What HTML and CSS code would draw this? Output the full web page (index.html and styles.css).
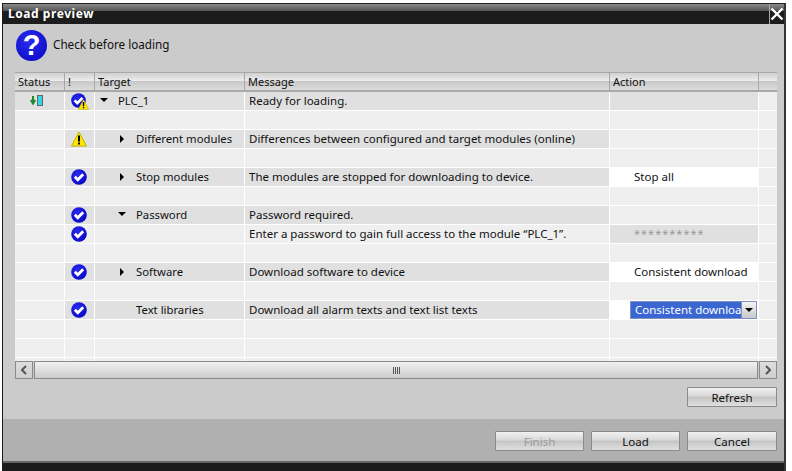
FILE: index.html
```html
<!DOCTYPE html>
<html lang="en">
<head>
<meta charset="utf-8">
<title>Load preview</title>
<link rel="stylesheet" href="styles.css">
</head>
<body>
<svg class="defs" width="0" height="0" aria-hidden="true">
  <defs>
    <radialGradient id="blue" cx="0.4" cy="0.35" r="0.7">
      <stop offset="0" stop-color="#2a2af0"/>
      <stop offset="1" stop-color="#0606c4"/>
    </radialGradient>
    <symbol id="ok" viewBox="0 0 16 16">
      <circle cx="8" cy="8" r="7.800" fill="url(#blue)"/>
      <path d="M3.800 7.800l3 3 5.400-5.600" fill="none" stroke="#fff" stroke-width="2.800"/>
    </symbol>
    <symbol id="warn" viewBox="0 0 16 16">
      <path d="M8 1L15.500 15H.5z" fill="#ffe600" stroke="#c8b400" stroke-width="1"/>
      <path d="M7 4.500h2v6H7zM7 11.500h2v2H7z" fill="#000"/>
    </symbol>
  </defs>
</svg>
<main class="window">
  <header class="titlebar">
    <span class="title">Load preview</span>
    <button class="close" aria-label="Close">
      <svg width="14" height="14" viewBox="0 0 14 14"><path d="M1.500 1.500l11 11M12.500 1.500l-11 11" stroke="#fff" stroke-width="2.400" fill="none"/></svg>
    </button>
  </header>
  <section class="content">
    <div class="prompt">
      <span class="qmark">?</span>
      <span class="prompt-text">Check before loading</span>
    </div>
    <div class="table">
      <div class="row head">
        <div class="cell">Status</div><div class="cell">!</div><div class="cell">Target</div><div class="cell">Message</div><div class="cell">Action</div><div class="cell"></div>
      </div>
      <div class="body">
        <div class="row">
          <div class="cell hl center"><svg class="status" width="14" height="14" viewBox="0 0 14 14"><path d="M3 2v6.500M.8 6L3 9.500 5.200 6" stroke="#1b8b2b" stroke-width="2" fill="none"/><rect x="7.500" y="1.500" width="5" height="10" fill="#35d5e0" stroke="#5a6a70"/></svg></div>
          <div class="cell hl center"><span class="overlay"><svg width="15" height="15"><use href="#ok"/></svg><svg class="mini" width="11" height="11"><use href="#warn"/></svg></span></div>
          <div class="cell hl tree"><i class="tri down"></i><span>PLC_1</span></div>
          <div class="cell hl msg">Ready for loading.</div>
          <div class="cell hl"></div>
          <div class="cell"></div>
        </div>
        <div class="row"><div class="cell"></div><div class="cell"></div><div class="cell"></div><div class="cell"></div><div class="cell"></div><div class="cell"></div></div>
        <div class="row">
          <div class="cell"></div>
          <div class="cell hl center"><svg class="ico" width="16" height="16"><use href="#warn"/></svg></div>
          <div class="cell hl tree l1"><i class="tri right"></i><span>Different modules</span></div>
          <div class="cell hl msg">Differences between configured and target modules (online)</div>
          <div class="cell"></div>
          <div class="cell"></div>
        </div>
        <div class="row"><div class="cell"></div><div class="cell"></div><div class="cell"></div><div class="cell"></div><div class="cell"></div><div class="cell"></div></div>
        <div class="row">
          <div class="cell"></div>
          <div class="cell hl center"><svg class="ico" width="16" height="16"><use href="#ok"/></svg></div>
          <div class="cell hl tree l1"><i class="tri right"></i><span>Stop modules</span></div>
          <div class="cell hl msg">The modules are stopped for downloading to device.</div>
          <div class="cell white action">Stop all</div>
          <div class="cell"></div>
        </div>
        <div class="row"><div class="cell"></div><div class="cell"></div><div class="cell"></div><div class="cell"></div><div class="cell"></div><div class="cell"></div></div>
        <div class="row">
          <div class="cell"></div>
          <div class="cell hl center"><svg class="ico" width="16" height="16"><use href="#ok"/></svg></div>
          <div class="cell hl tree l1"><i class="tri down"></i><span>Password</span></div>
          <div class="cell hl msg">Password required.</div>
          <div class="cell"></div>
          <div class="cell"></div>
        </div>
        <div class="row">
          <div class="cell"></div>
          <div class="cell center"><svg class="ico" width="16" height="16"><use href="#ok"/></svg></div>
          <div class="cell"></div>
          <div class="cell msg">Enter a password to gain full access to the module “PLC_1”.</div>
          <div class="cell hl action pass">**********</div>
          <div class="cell"></div>
        </div>
        <div class="row"><div class="cell"></div><div class="cell"></div><div class="cell"></div><div class="cell"></div><div class="cell"></div><div class="cell"></div></div>
        <div class="row">
          <div class="cell"></div>
          <div class="cell hl center"><svg class="ico" width="16" height="16"><use href="#ok"/></svg></div>
          <div class="cell hl tree l1"><i class="tri right"></i><span>Software</span></div>
          <div class="cell hl msg">Download software to device</div>
          <div class="cell white action">Consistent download</div>
          <div class="cell"></div>
        </div>
        <div class="row"><div class="cell"></div><div class="cell"></div><div class="cell"></div><div class="cell"></div><div class="cell"></div><div class="cell"></div></div>
        <div class="row">
          <div class="cell"></div>
          <div class="cell hl center"><svg class="ico" width="16" height="16"><use href="#ok"/></svg></div>
          <div class="cell hl tree l1"><i class="tri none"></i><span>Text libraries</span></div>
          <div class="cell hl msg">Download all alarm texts and text list texts</div>
          <div class="cell white combo-cell">
            <div class="combo"><span class="combo-text">Consistent download</span><span class="combo-btn"><i class="tri down small"></i></span></div>
          </div>
          <div class="cell"></div>
        </div>
        <div class="row"><div class="cell"></div><div class="cell"></div><div class="cell"></div><div class="cell"></div><div class="cell"></div><div class="cell"></div></div>
        <div class="row"><div class="cell"></div><div class="cell"></div><div class="cell"></div><div class="cell"></div><div class="cell"></div><div class="cell"></div></div>
        <div class="row"><div class="cell"></div><div class="cell"></div><div class="cell"></div><div class="cell"></div><div class="cell"></div><div class="cell"></div></div>
      </div>
      <div class="scrollbar">
        <button class="sb-btn" aria-label="Scroll left"><svg width="8" height="10" viewBox="0 0 8 10"><path d="M6 1L2 5l4 4" stroke="#555" stroke-width="2" fill="none"/></svg></button>
        <div class="sb-track"><span class="grip"></span></div>
        <button class="sb-btn" aria-label="Scroll right"><svg width="8" height="10" viewBox="0 0 8 10"><path d="M2 1l4 4-4 4" stroke="#555" stroke-width="2" fill="none"/></svg></button>
      </div>
    </div>
    <div class="refresh-row"><button class="btn">Refresh</button></div>
  </section>
  <footer class="footer">
    <button class="btn narrow disabled">Finish</button>
    <button class="btn narrow">Load</button>
    <button class="btn">Cancel</button>
  </footer>
</main>
</body>
</html>
```

FILE: styles.css
```css
* { box-sizing: border-box; }
html, body { margin: 0; height: 100%; }
body {
  background: #fff;
  font-family: "Noto Sans", "DejaVu Sans", sans-serif;
  font-size: 11.5px;
  color: #111;
  overflow: hidden;
  padding: 3px 0 0 2px;
}
.defs { position: absolute; }
.window {
  width: 784px;
  height: 468px;
  display: flex;
  flex-direction: column;
  border-left: 1px solid #1c1c1c;
  border-right: 2px solid #333;
  border-top: 1px solid #222;
  background: #cbcbcb;
}
.titlebar {
  height: 20px;
  flex: none;
  display: flex;
  justify-content: space-between;
  background: linear-gradient(#8a8a8a 0, #555 7px, #1c1c1c 7px, #1c1c1c 100%);
}
.title {
  color: #fff;
  font-weight: 700;
  font-size: 12px;
  padding: 1px 0 0 5px;
  letter-spacing: 0.55px;
}
.close {
  width: 15px;
  height: 20px;
  padding: 0;
  border: 0;
  border-left: 1px solid #aaa;
  background: transparent;
  display: flex;
  align-items: center;
  justify-content: center;
}
.content {
  flex: none;
  height: 395px;
  padding: 0 7px 0 12px;
}
.prompt {
  height: 48px;
  display: flex;
  align-items: center;
  gap: 6px;
  padding: 0 0 6px 1px;
  font-size: 11.7px;
}
.prompt-text { margin-top: -2px; }
.qmark {
  width: 31px;
  height: 31px;
  border-radius: 50%;
  background: radial-gradient(circle at 40% 35%, #2a2af0, #0606c0);
  color: #fff;
  font: 700 29px/31px "Liberation Sans", sans-serif;
  text-align: center;
}
.table { width: 762px; }
.row {
  display: grid;
  grid-template-columns: 50px 30px 150px 365px 149px 18px;
  height: 19px;
  border-bottom: 1px solid #fff;
}
.cell {
  border-right: 1px solid #fff;
  background: #efefef;
  padding-left: 3px;
  line-height: 18px;
  white-space: nowrap;
  overflow: hidden;
  display: flex;
  align-items: center;
}
.cell:last-child { border-right: 0; }
.row .hl { background: #e0e0e0; }
.row .white { background: #fff; }
.center { justify-content: center; padding-left: 0; }
.msg { padding-left: 4px; }
.ico { display: block; margin-right: 1px; }
.head {
  height: 20px;
  font-size: 11px;
  border-top: 1px solid #a8a8a8;
  border-bottom: 2px solid #a8a8a8;
}
.head .cell {
  background: linear-gradient(#d0d0d0, #ececec 45%, #c8c8c8 50%, #dcdcdc);
  border-right: 1px solid #a8a8a8;
}
.head .cell:last-child { border-right: 0; }
.body {
  height: 269px;
  overflow: hidden;
}
.tree { padding-left: 5px; font-size: 11.3px; }
.tree.l1 { padding-left: 23px; }
.tri {
  display: block;
  flex: none;
  width: 0;
  height: 0;
  margin-right: 10px;
  border-style: solid;
}
.tri.down {
  border-width: 4px 4px 0 4px;
  border-color: #000 transparent transparent;
  margin-top: -3px;
}
.tri.right {
  border-width: 4px 0 4px 4px;
  border-color: transparent transparent transparent #000;
  margin-left: 2px;
  margin-right: 12px;
}
.tri.none { border: 0; width: 18px; margin-right: 0; }
.combo-btn .tri.small { margin: 0; }
.overlay { position: relative; display: block; width: 17px; height: 17px; margin-right: 1px; }
.overlay svg { display: block; }
.overlay .mini { position: absolute; right: -1px; bottom: 0; }
.status { display: block; margin-right: 5px; }
.action { padding-left: 24px; }
.pass { color: #999; letter-spacing: 1px; font-size: 11px; }
.combo-cell { padding: 0 1px 0 20px; }
.combo {
  width: 127px;
  height: 18px;
  display: flex;
  background: #3a66d2;
  border: 1px solid #8090c0;
  color: #fff;
}
.combo-text {
  flex: 1;
  overflow: hidden;
  padding-left: 4px;
  line-height: 16px;
}
.combo-btn {
  flex: none;
  width: 15px;
  background: linear-gradient(#f4f4f4, #c8c8c8);
  border-left: 1px solid #8090c0;
  display: flex;
  align-items: center;
  justify-content: center;
}
.scrollbar {
  height: 18px;
  display: flex;
  gap: 1px;
}
.sb-btn {
  flex: none;
  width: 18px;
  padding: 0;
  border: 1px solid #8a8a8a;
  background: linear-gradient(#dedede, #cfcfcf);
  display: flex;
  align-items: center;
  justify-content: center;
}
.sb-track {
  flex: 1;
  border: 1px solid #8a8a8a;
  background: linear-gradient(#f0f0f0, #cccccc);
  display: flex;
  align-items: center;
  justify-content: center;
}
.grip {
  width: 7px;
  height: 7px;
  background: repeating-linear-gradient(90deg, #555 0 1px, transparent 1px 2px);
}
.refresh-row {
  display: flex;
  justify-content: flex-end;
  padding-top: 8px;
}
.btn {
  width: 90px;
  height: 20px;
  padding: 0;
  font: inherit;
  color: #111;
  border: 1px solid #8a8a8a;
  border-radius: 1px;
  background: linear-gradient(#f2f2f2, #d8d8d8 45%, #c4c4c4 50%, #e0e0e0);
}
.btn.narrow { width: 89px; }
.btn.disabled { color: #9c9c9c; }
.footer {
  flex: none;
  height: 42px;
  background: #b0b0b0;
  display: flex;
  justify-content: flex-end;
  gap: 7px;
  padding: 12px 7px 0 0;
}
.window::after {
  content: "";
  display: block;
  flex: 1;
  background: linear-gradient(#666 0, #666 2px, #1c1c1c 2px);
}
```
